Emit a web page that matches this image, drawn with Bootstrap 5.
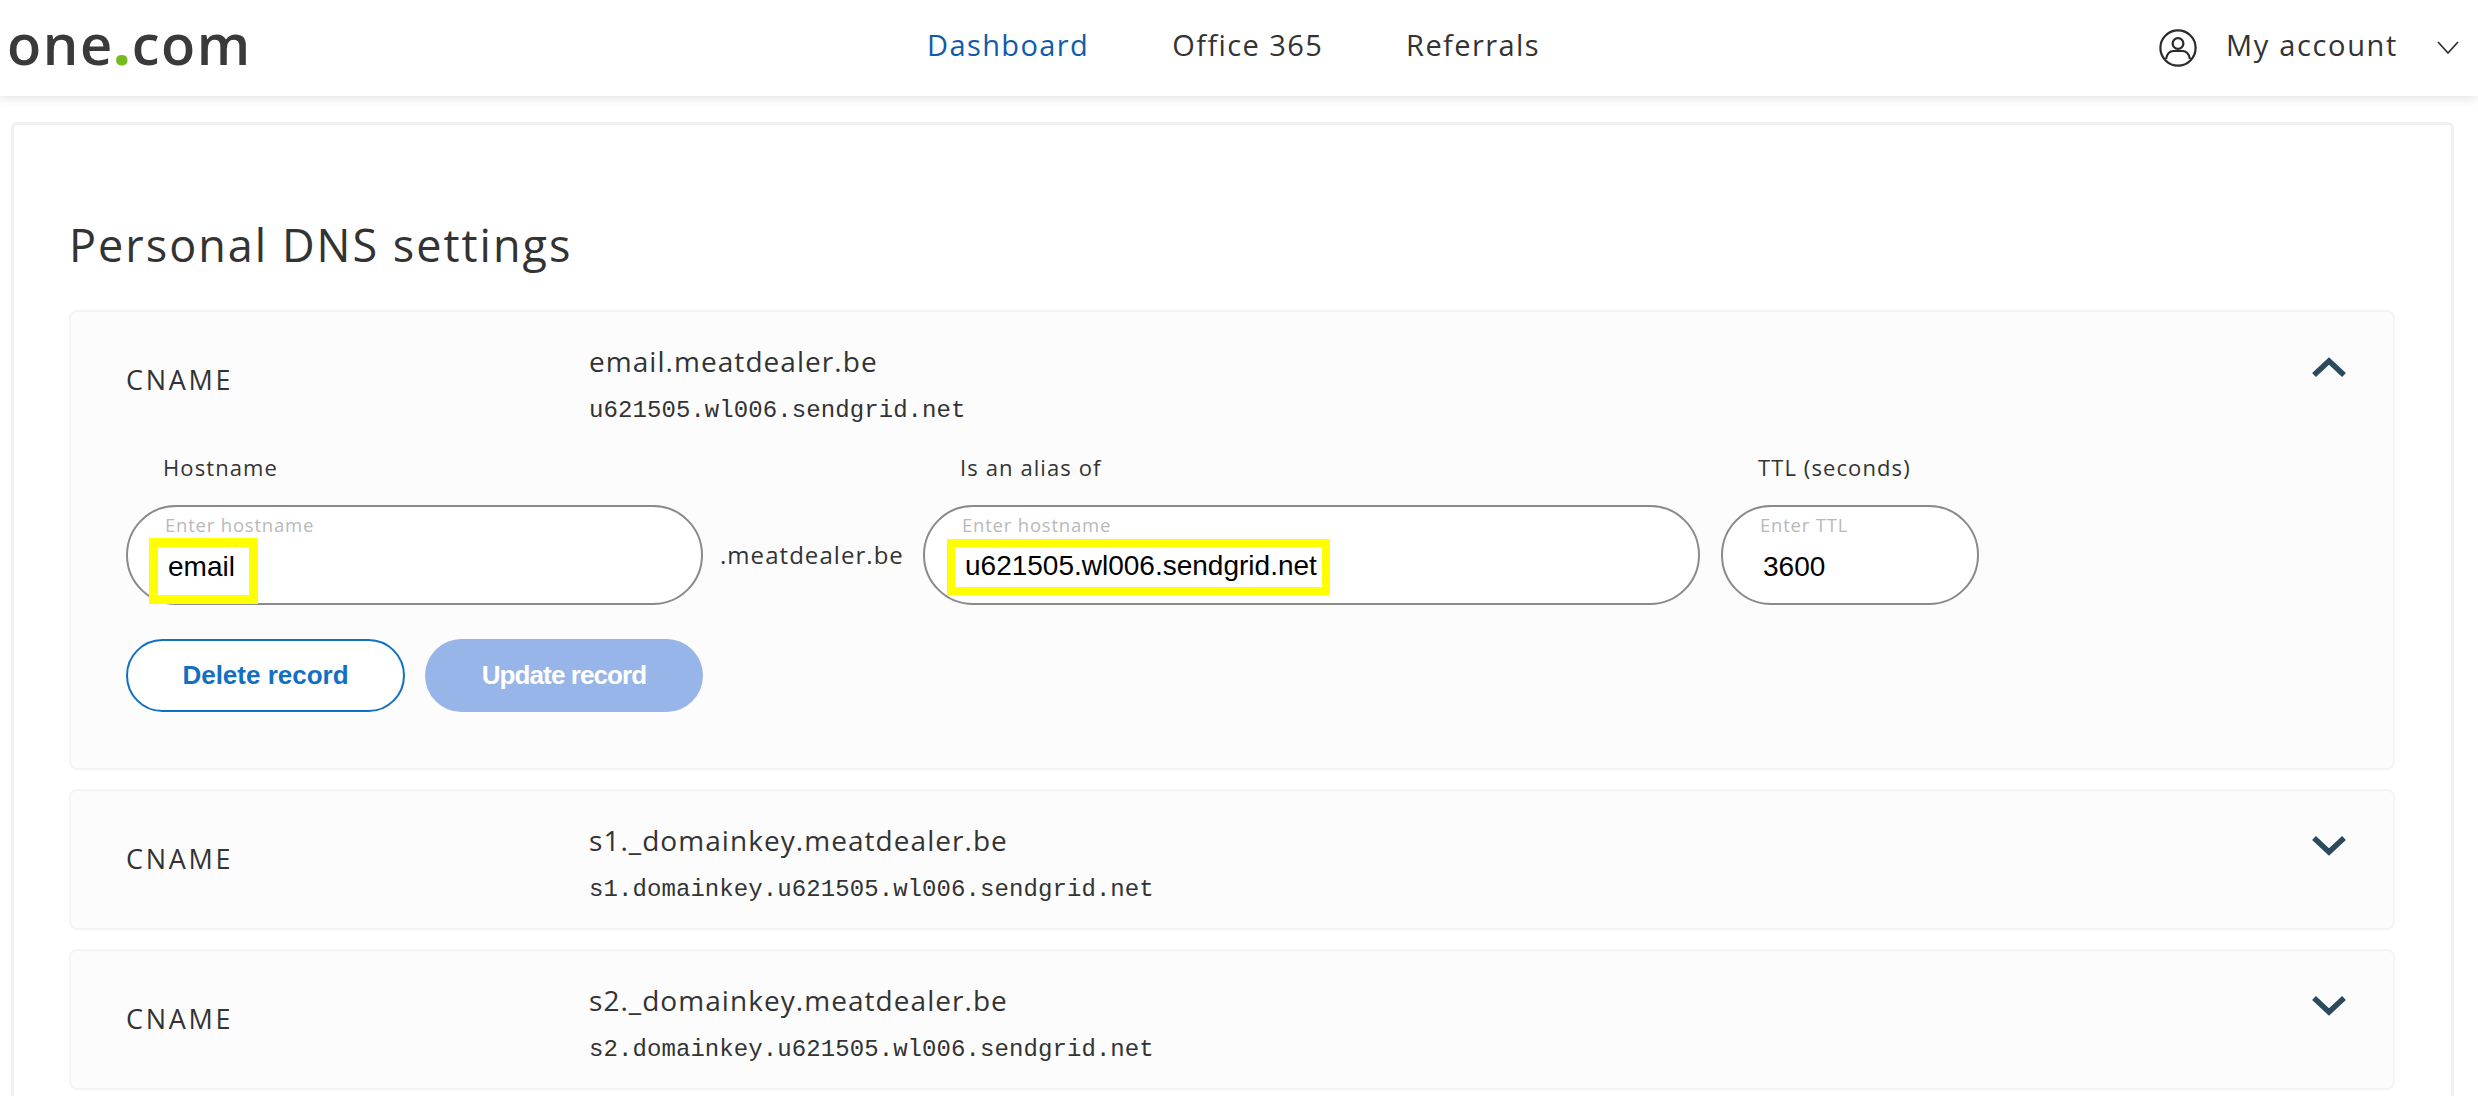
<!DOCTYPE html>
<html lang="en"><head><meta charset="utf-8"><title>Personal DNS settings</title>
<link href="https://cdn.jsdelivr.net/npm/bootstrap@5.3.0/dist/css/bootstrap.min.css" rel="stylesheet">
<style>
html,body{height:1096px;overflow:hidden;background:#fff}
body{font-family:"Open Sans","Noto Sans",sans-serif;color:#333}
.topbar{height:96px;box-shadow:0 2px 10px rgba(0,0,0,.12);flex-wrap:nowrap;position:relative;z-index:2}
.brandbox{width:927px;padding-left:7px;font-size:56px;line-height:86px;font-weight:600;letter-spacing:1.6px;color:#3a3a3a;height:96px}
.brandbox b{color:#76bc21;font-weight:800}
.menu{gap:83px;font-size:29px;letter-spacing:1.4px;padding-bottom:6px}
.menu a{color:#333;text-decoration:none}
.menu a.on{color:#0f5ca8}
.acct{font-size:29px;letter-spacing:1.65px;color:#333;padding-right:18px}
.acctname{margin-left:29px;padding-bottom:6px}
.acctchev{margin-left:36px}
.shell{margin:26px 24px 0 11px;border:3px solid #f1f1f1;border-radius:8px;padding:89px 56px 60px 55px;background:#fff}
.shell h1{font-size:45px;font-weight:400;letter-spacing:2px;line-height:62px;margin:0 0 34px;color:#333}
.rec{background:#fcfcfc;border:2px solid #f4f4f4;border-radius:8px;margin-bottom:19px;padding:0 55px}
.rechead{height:137px;position:relative}
.rtype{width:463px;font-size:27px;letter-spacing:2.7px;color:#333}
.rname{font-size:28px;letter-spacing:1.05px;line-height:36px;color:#333;margin-top:7px}
.rval{font-family:"Liberation Mono",monospace;font-size:24px;letter-spacing:.08px;line-height:30px;margin-top:17px;color:#333}
.chev{position:absolute;right:-8px;top:45px}
.flds{margin-top:3px}
.lbl{font-size:22px;letter-spacing:1.1px;line-height:30px;padding-left:37px;margin-bottom:23px;color:#333}
.pill{height:100px;border:2px solid #8a8a8a;border-radius:50px;background:#fff;padding:6px 0 0 37px;font-family:"Liberation Sans",Arial,sans-serif;color:#000;font-size:28px;line-height:32px}
.mini{display:block;font-family:"Open Sans",sans-serif;font-size:18.5px;line-height:24px;letter-spacing:.8px;color:#b9b9b9}
.hl{display:inline-block;border:9px solid #ff0;background:#fff}
.hl1{margin:1px 0 0 -16px;padding:0 14px 0 10px;height:66px;line-height:40px}
.hl2{margin:2px 0 0 -15px;padding:0 0 0 10px;height:56px;line-height:38px;border-width:8px;width:383px;white-space:nowrap}
.val3{display:block;padding-top:14px;padding-left:3px}
.f1{width:577px}.f2{width:777px}.f3{width:258px;margin-left:21px}
.sfx{width:220px;height:100px;padding-left:17px;font-size:24px;letter-spacing:1.05px;color:#333}
.acts{margin-top:34px;gap:20px;padding-bottom:56px}
.btn.act{height:73px;border-radius:37px;font-family:"Liberation Sans",Arial,sans-serif;font-weight:700;font-size:26px;padding:0}
.act1{width:279px;border:2px solid #1170c4;color:#1170c4;background:#fff}
.act2{width:278px;background:#97b5e8;color:#fff;border:0;letter-spacing:-.9px}
</style></head><body>
<nav class="navbar bg-white topbar p-0 justify-content-start">
  <div class="brandbox">one<b>.</b>com</div>
  <div class="d-flex menu"><a class="on" href="#">Dashboard</a><a href="#">Office 365</a><a href="#">Referrals</a></div>
  <div class="ms-auto d-flex align-items-center acct">
    <svg width="38" height="38" viewBox="0 0 38 38" fill="none" stroke="#2a2a2a" stroke-width="2.2"><circle cx="19" cy="19" r="17.600"/><circle cx="19" cy="14.500" r="5.400"/><path d="M7 30c1-5 4-8 7.500-8h9c3.500 0 6.500 3 7.500 8"/></svg>
    <span class="acctname">My account</span>
    <svg class="acctchev" width="26" height="14" viewBox="0 0 26 14" fill="none" stroke="#333" stroke-width="1.8"><path d="M4 1l10 11L24 1"/></svg>
  </div>
</nav>
<main class="card shell rounded-2">
  <h1>Personal DNS settings</h1>
  <section class="rec">
    <div class="d-flex align-items-center rechead">
      <div class="rtype">CNAME</div>
      <div><div class="rname">email.meatdealer.be</div><div class="rval">u621505.wl006.sendgrid.net</div></div>
      <svg class="chev" width="34" height="20" viewBox="0 0 34 20" fill="none" stroke="#2b4a5e" stroke-width="5.500"><path d="M2 18L17 4l15 14"/></svg>
    </div>
    <div class="d-flex flds">
      <div class="f1"><div class="lbl">Hostname</div><div class="pill"><span class="mini">Enter hostname</span><span class="hl hl1">email</span></div></div>
      <div class="sfx align-self-end d-flex align-items-center">.meatdealer.be</div>
      <div class="f2"><div class="lbl">Is an alias of</div><div class="pill"><span class="mini">Enter hostname</span><span class="hl hl2">u621505.wl006.sendgrid.net</span></div></div>
      <div class="f3"><div class="lbl">TTL (seconds)</div><div class="pill"><span class="mini">Enter TTL</span><span class="val3">3600</span></div></div>
    </div>
    <div class="d-flex acts">
      <button class="btn act act1" type="button">Delete record</button>
      <button class="btn act act2" type="button">Update record</button>
    </div>
  </section>
  <section class="rec">
    <div class="d-flex align-items-center rechead">
      <div class="rtype">CNAME</div>
      <div><div class="rname">s1._domainkey.meatdealer.be</div><div class="rval">s1.domainkey.u621505.wl006.sendgrid.net</div></div>
      <svg class="chev" width="34" height="20" viewBox="0 0 34 20" fill="none" stroke="#2b4a5e" stroke-width="5.500"><path d="M2 2l15 14L32 2"/></svg>
    </div>
  </section>
  <section class="rec">
    <div class="d-flex align-items-center rechead">
      <div class="rtype">CNAME</div>
      <div><div class="rname">s2._domainkey.meatdealer.be</div><div class="rval">s2.domainkey.u621505.wl006.sendgrid.net</div></div>
      <svg class="chev" width="34" height="20" viewBox="0 0 34 20" fill="none" stroke="#2b4a5e" stroke-width="5.500"><path d="M2 2l15 14L32 2"/></svg>
    </div>
  </section>
</main>
</body></html>
